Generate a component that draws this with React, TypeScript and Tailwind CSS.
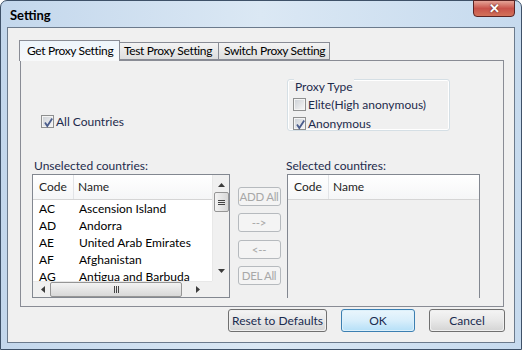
import React from "react";

const font = { fontFamily: 'Lato, "Noto Sans", "Liberation Sans", sans-serif' };

function Check({ checked }: { checked: boolean }) {
  return (
    <div className="w-[13px] h-[13px] border border-[#8e8f8f] bg-[#f4f4f4] p-px shrink-0">
      <div className="w-full h-full bg-gradient-to-br from-[#cfd3d8] to-[#f4f4f4] relative">
        {checked && (
          <svg viewBox="0 0 11 11" className="absolute left-0 top-0 w-[11px] h-[11px]">
            <path d="M2 5.5 L4.3 9 L9.2 1.5" fill="none" stroke="#4b5d8c" strokeWidth="1.8" />
          </svg>
        )}
      </div>
    </div>
  );
}

function Arrow({ dir }: { dir: "up" | "down" | "left" | "right" }) {
  const p =
    dir === "up" ? "M0 4 L3.5 0 L7 4 Z" : dir === "down" ? "M0 0 L7 0 L3.5 4 Z" : dir === "left" ? "M4 0 L4 7 L0 3.5 Z" : "M0 0 L0 7 L4 3.5 Z";
  const w = dir === "up" || dir === "down" ? 7 : 4;
  const h = dir === "up" || dir === "down" ? 4 : 7;
  return (
    <svg width={w} height={h} viewBox={`0 0 ${w} ${h}`}>
      <path d={p} fill="#3c3c3c" />
    </svg>
  );
}

const rows = [
  ["AC", "Ascension Island"],
  ["AD", "Andorra"],
  ["AE", "United Arab Emirates"],
  ["AF", "Afghanistan"],
  ["AG", "Antigua and Barbuda"],
];

function Header() {
  return (
    <div className="h-[25px] flex items-center bg-gradient-to-b from-white to-[#f5f6f7] border-b border-[#d5d5d5] text-[12px] text-[#1e1e1e] shrink-0 whitespace-nowrap">
      <div className="w-[41px] h-full flex items-center pl-[6px] border-r border-[#e2e4e7]">Code</div>
      <div className="pl-[4px]">Name</div>
    </div>
  );
}

function SmallBtn({ label }: { label: string }) {
  return (
    <div className="h-[19px] w-[43px] rounded-[3px] border border-[#b6babe] bg-[#f4f4f4] flex items-center justify-center text-[11.5px] text-[#a8a8a8] whitespace-nowrap tracking-[-0.3px]">
      {label}
    </div>
  );
}

function BigBtn({ label, w, focus }: { label: string; w: string; focus?: boolean }) {
  return (
    <div
      className={
        "h-[23px] rounded-[3px] border p-px " +
        w +
        (focus ? " border-[#3c7fb1] bg-[#dcf0fb]" : " border-[#707070] bg-[#f0f0f0]")
      }
    >
      <div
        className={
          "h-full w-full rounded-[2px] flex items-center justify-center text-[12px] text-[#1a2b4f] whitespace-nowrap " +
          (focus
            ? "bg-gradient-to-b from-[#e8f5fc] via-[#d8eefb] to-[#b8e1f8]"
            : "bg-gradient-to-b from-[#f3f3f3] via-[#e8e8e8] to-[#d6d6d6]")
        }
      >
        {label}
      </div>
    </div>
  );
}

export default function App() {
  return (
    <div style={font} className="w-[522px] h-[350px] overflow-hidden bg-white">
      <div className="w-[522px] h-[350px] rounded-t-[7px] border border-[#3e5168] bg-gradient-to-r from-[#c3d7ec] via-[#dbe8f4] to-[#c6daee] flex flex-col">
        {/* title bar */}
        <div className="h-[26px] flex items-start justify-between shrink-0">
          <div className="pl-[9px] pt-[7px] text-[13px] font-bold text-black leading-[15px]">Setting</div>
          <div className="mr-[6px] w-[42px] h-[17px] -mt-px rounded-b-[4px] border border-[#5a2323] bg-gradient-to-b from-[#e4a397] via-[#c8524a] to-[#d2725a] flex items-center justify-center">
            <span className="text-white font-bold text-[13px] leading-none" style={{ textShadow: "0 0 2px #3a1010" }}>
              ✕
            </span>
          </div>
        </div>
        {/* client */}
        <div className="mx-[6px] h-[316px] border border-[#6b7a8c] bg-[#f0f0f0] flex flex-col text-[12px] text-black whitespace-nowrap">
          {/* tabs */}
          <div className="flex items-end pl-[11px] pt-[11px] h-[32px] shrink-0 tracking-[-0.35px]">
            <div className="relative z-10 w-[101px] h-[21px] -mb-px border border-b-0 border-[#898c95] bg-gradient-to-b from-[#eef5fb] to-[#f8f9fa] flex items-center pl-[7px] pb-px">
              Get Proxy Setting
            </div>
            <div className="w-[99px] h-[18px] border border-l-0 border-[#898c95] bg-gradient-to-b from-[#f4f4f4] to-[#dedede] flex items-center pl-[4px]">
              Test Proxy Setting
            </div>
            <div className="w-[111px] h-[18px] border border-l-0 border-[#898c95] bg-gradient-to-b from-[#f4f4f4] to-[#dedede] flex items-center pl-[5px]">
              Switch Proxy Setting
            </div>
          </div>
          {/* panel */}
          <div className="ml-[12px] w-[484px] h-[247px] border border-[#898c95] bg-[#f0f0f0] pl-[11px] flex flex-col shrink-0">
            <div className="flex h-[96px] shrink-0">
              <div className="w-[254px] pt-[54px] pl-[9px]">
                <div className="flex items-center gap-[2px] h-[13px]">
                  <Check checked />
                  <span className="text-[#1e2b4c]">All Countries</span>
                </div>
              </div>
              <div className="pt-[26px] pl-[1px]">
                <div className="relative w-[163px] h-[52px]">
                  <div className="absolute inset-0 rounded-[3px] border border-[#d5dfe5] shadow-[inset_0_0_0_1px_#ffffff]" />
                  <div className="relative -mt-[8px] pl-[7px] flex flex-col">
                    <span className="self-start bg-[#f0f0f0] px-px leading-[16px] text-[#1e2b4c]">Proxy Type</span>
                    <div className="flex items-center gap-[2px] mt-[3px] ml-[-1px] h-[13px]">
                      <Check checked={false} />
                      <span className="text-[#1e2b4c]">Elite(High anonymous)</span>
                    </div>
                    <div className="flex items-center gap-[2px] mt-[6px] ml-[-1px] h-[13px]">
                      <Check checked />
                      <span className="text-[#1e2b4c]">Anonymous</span>
                    </div>
                  </div>
                </div>
              </div>
            </div>
            {/* labels */}
            <div className="flex h-[17px] items-center shrink-0 text-[#1e2b4c]">
              <div className="w-[254px] pl-[2px]">Unselected countries:</div>
              <div>Selected countires:</div>
            </div>
            {/* lists */}
            <div className="flex items-start">
              <div className="w-[198px] h-[124px] border border-[#828790] bg-white flex flex-col">
                <div className="flex flex-1 min-h-0">
                  <div className="flex-1 flex flex-col min-w-0 overflow-hidden">
                    <Header />
                    <div className="flex flex-col text-[12px]">
                      {rows.map(([c, n]) => (
                        <div key={c} className="h-[17px] flex items-center shrink-0 whitespace-nowrap">
                          <span className="w-[46px] pl-[6px]">{c}</span>
                          <span>{n}</span>
                        </div>
                      ))}
                    </div>
                  </div>
                  {/* vertical scrollbar */}
                  <div className="w-[17px] bg-[#f0f0f0] border-l border-[#e8e8e8] flex flex-col items-center">
                    <div className="h-[17px] flex items-center justify-center pt-[3px]">
                      <Arrow dir="up" />
                    </div>
                    <div className="w-[15px] h-[20px] rounded-[2px] border border-[#959595] bg-gradient-to-r from-[#f3f3f3] to-[#d8d8d8] flex flex-col items-center justify-center gap-px">
                      <div className="w-[7px] h-px bg-[#444]" />
                      <div className="w-[7px] h-px bg-[#444]" />
                      <div className="w-[7px] h-px bg-[#444]" />
                    </div>
                    <div className="flex-1" />
                    <div className="h-[12px] flex items-start justify-center">
                      <Arrow dir="down" />
                    </div>
                  </div>
                </div>
                {/* horizontal scrollbar */}
                <div className="h-[16px] flex shrink-0">
                  <div className="flex-1 bg-[#f0f0f0] border-t border-[#e8e8e8] flex items-center">
                    <div className="w-[17px] flex justify-center pl-[2px]">
                      <Arrow dir="left" />
                    </div>
                    <div className="w-[132px] h-[15px] rounded-[2px] border border-[#959595] bg-gradient-to-b from-[#f3f3f3] to-[#d8d8d8] flex items-center justify-center gap-px">
                      <div className="w-px h-[7px] bg-[#444]" />
                      <div className="w-px h-[7px] bg-[#444]" />
                      <div className="w-px h-[7px] bg-[#444]" />
                    </div>
                    <div className="flex-1 flex justify-center pl-[2px]">
                      <Arrow dir="right" />
                    </div>
                  </div>
                  <div className="w-[17px] bg-[#f0f0f0]" />
                </div>
              </div>
              <div className="w-[57px] flex flex-col items-center gap-[7px] pt-[13px] pl-[1px]">
                <SmallBtn label="ADD All" />
                <SmallBtn label="-->" />
                <div className="mt-px">
                  <SmallBtn label="<--" />
                </div>
                <SmallBtn label="DEL All" />
              </div>
              <div className="w-[193px] h-[124px] border border-[#828790] bg-[#f0f0f0] border-b-0 flex flex-col">
                <div className="bg-white">
                  <Header />
                </div>
              </div>
            </div>
          </div>
          {/* bottom buttons */}
          <div className="flex justify-end gap-[14px] pt-[2px] pr-[9px]">
            <BigBtn label="Reset to Defaults" w="w-[99px]" />
            <BigBtn label="OK" w="w-[74px]" focus />
            <BigBtn label="Cancel" w="w-[76px]" />
          </div>
        </div>
      </div>
    </div>
  );
}
